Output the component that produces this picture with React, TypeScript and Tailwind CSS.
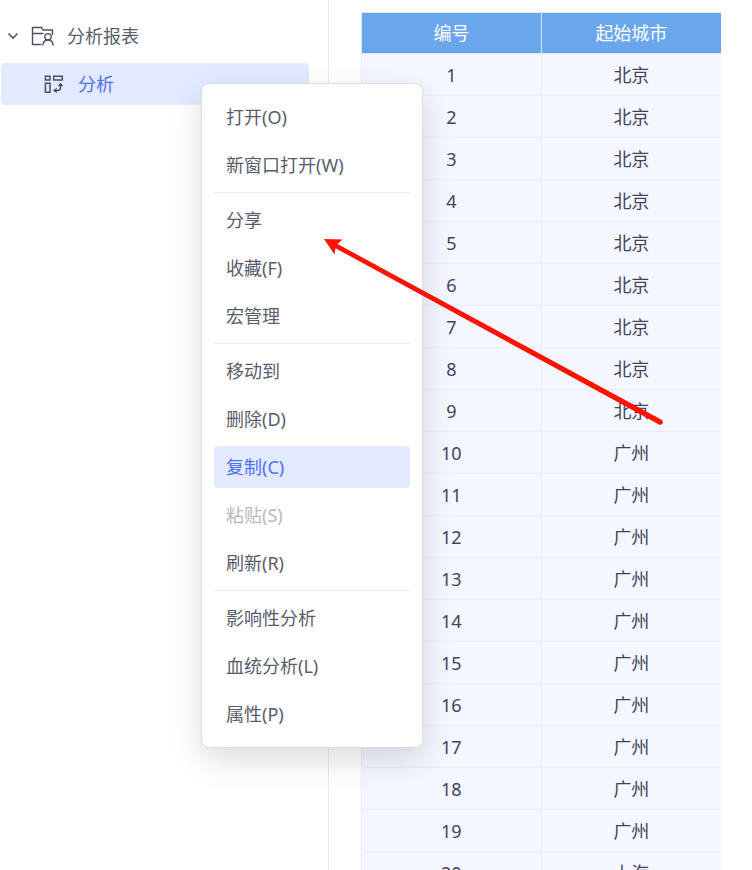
const MENU_GROUPS = [
  [{ label: "打开(O)" }, { label: "新窗口打开(W)" }],
  [{ label: "分享" }, { label: "收藏(F)" }, { label: "宏管理" }],
  [
    { label: "移动到" },
    { label: "删除(D)" },
    { label: "复制(C)", active: true },
    { label: "粘贴(S)", disabled: true },
    { label: "刷新(R)" },
  ],
  [{ label: "影响性分析" }, { label: "血统分析(L)" }, { label: "属性(P)" }],
] as { label: string; active?: boolean; disabled?: boolean }[][];

const ROWS = Array.from({ length: 20 }, (_, i) => ({
  id: i + 1,
  city: i < 9 ? "北京" : i < 19 ? "广州" : "上海",
}));

function ChevronIcon() {
  return (
    <svg width="12" height="8" viewBox="0 0 12 8" fill="none" stroke="#4b5263" strokeWidth="1.6">
      <path d="M1.5 1.5 6 6l4.5-4.5" />
    </svg>
  );
}

function FolderIcon() {
  return (
    <svg width="24" height="20" viewBox="0 0 24 20" fill="none" stroke="#4b5263" strokeWidth="1.4">
      <path d="M10.500 18.500h-9v-17h9l1.500 2.500h9.500v5M1.500 7.500h11" />
      <circle cx="17" cy="10.800" r="3.200" />
      <path d="M11.800 19.500c.2-3.400 2.200-5.500 5.200-5.500s5 2.100 5.200 5.500" />
    </svg>
  );
}

function ReportIcon() {
  return (
    <svg width="20" height="20" viewBox="0 0 20 20" fill="none" stroke="#4b5263" strokeWidth="1.500">
      <path d="M1.400 2.200h4.600v3.800H1.400zM9.700 2.200h8.600v3.800H9.700zM1.400 9.200h4.600v9H1.400z" />
      <path d="M16.500 11v2.500c0 2-1 3-3 3h-2" />
      <path fill="#4b5263" stroke="none" d="m16.500 8.500 2.700 3.700h-5.400zM9 16.500l3.700-2.700v5.400z" />
    </svg>
  );
}

function Sidebar() {
  return (
    <nav className="flex w-[329px] shrink-0 flex-col gap-1.5 border-r border-[#e9e9ec] pt-[15px] pr-[19px] pl-px">
      <button className="flex h-[42px] items-center pl-1.5 text-left">
        <ChevronIcon />
        <span className="mr-3 ml-3">
          <FolderIcon />
        </span>
        分析报表
      </button>
      <a href="#report" className="flex h-[42px] items-center gap-3.5 rounded-sm bg-[#e3e9fe] pl-[43px] text-[#4a72f5]">
        <ReportIcon />
        分析
      </a>
    </nav>
  );
}

function ReportTable() {
  return (
    <table className="w-full table-fixed border-collapse border-l border-[#e6eaf4] bg-[#f4f7ff] text-center text-[#43435e]">
      <thead>
        <tr className="h-[41px] bg-[#6aa6ec] text-white">
          <th className="border border-r-0 border-[#dfe7f5] p-0 font-normal">编号</th>
          <th className="border border-r-0 border-[#dfe7f5] p-0 font-normal">起始城市</th>
        </tr>
      </thead>
      <tbody>
        {ROWS.map((row) => (
          <tr key={row.id} className="h-[42px]">
            <td className="border border-r-0 border-[#e8ecf5] p-0">{row.id}</td>
            <td className="border border-r-0 border-[#e8ecf5] p-0">{row.city}</td>
          </tr>
        ))}
      </tbody>
    </table>
  );
}

function ContextMenu() {
  return (
    <div className="absolute top-[83px] left-[201px] flex w-[222px] flex-col gap-1.5 rounded-lg border border-[#dcdee3] bg-white p-3 shadow-[0_12px_32px_rgba(0,0,0,0.14)]">
      {MENU_GROUPS.map((group, i) => (
        <div key={i} className="flex flex-col gap-1.5">
          {i > 0 && <hr className="border-[#e8eaf0]" />}
          {group.map((item) => (
            <button
              key={item.label}
              disabled={item.disabled}
              className={
                item.active
                  ? "h-[42px] rounded-sm bg-[#e3e9fe] px-3 text-left text-[#4a72f5]"
                  : "h-[42px] rounded-sm px-3 text-left disabled:text-[#b8b8b8]"
              }
            >
              {item.label}
            </button>
          ))}
        </div>
      ))}
    </div>
  );
}

function Arrow() {
  return (
    <svg
      className="pointer-events-none absolute top-[235px] left-[320px]"
      width="350"
      height="195"
      viewBox="320 235 350 195"
      fill="#ff1200"
    >
      <path d="M324 239 342.500 239.500 337.500 244 661.500 419.800Q663.800 422 662.300 424Q660.500 425.500 658.500 424.300L335.500 248.200 334.500 254.500Z" />
    </svg>
  );
}

export default function App() {
  return (
    <div className="relative flex h-screen overflow-hidden bg-white font-['Noto_Sans','Noto_Sans_CJK_SC',sans-serif] text-lg leading-6 text-[#575d6c]">
      <Sidebar />
      <main className="min-w-0 flex-1 pt-3 pr-[31px] pl-8">
        <ReportTable />
      </main>
      <ContextMenu />
      <Arrow />
    </div>
  );
}
